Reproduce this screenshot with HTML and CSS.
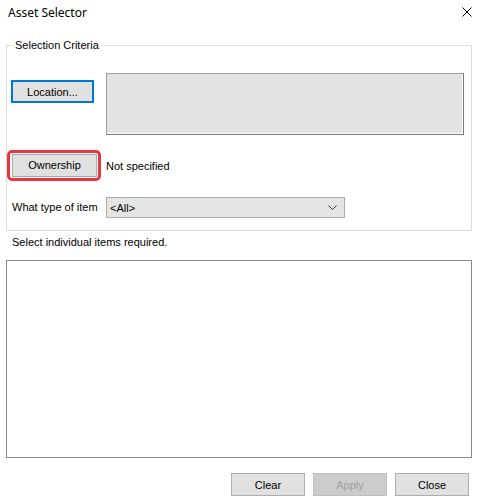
FILE: index.html
```html
<!DOCTYPE html>
<html lang="en">
<head>
    <meta charset="UTF-8">
    <meta name="viewport" content="width=device-width, initial-scale=1.0">
    <title>Asset Selector</title>
    <link rel="stylesheet" href="styles.css">
</head>
<body>
    <div class="dialog">
        <div class="titlebar">
            <span class="title">Asset Selector</span>
            <button class="close-x" type="button" aria-label="Close">
                <svg width="10" height="10" viewBox="0 0 10 10">
                    <path d="M0.5 0.5 L9.5 9.5 M9.5 0.5 L0.5 9.5" stroke="#000" stroke-width="1" fill="none"/>
                </svg>
            </button>
        </div>

        <fieldset class="criteria">
            <legend>Selection Criteria</legend>
            <div class="criteria-grid">
                <div class="location-cell">
                    <button type="button" class="btn btn-focus">Location...</button>
                </div>
                <div class="location-box"></div>

                <div>
                    <span class="highlight">
                        <button type="button" class="btn">Ownership</button>
                    </span>
                </div>
                <div class="value">Not specified</div>

                <label class="type-label" for="item_type">What type of item</label>
                <div class="select-wrap">
                    <select id="item_type" name="item_type">
                        <option>&lt;All&gt;</option>
                    </select>
                    <svg class="chevron" width="9" height="5" viewBox="0 0 9 5">
                        <path d="M0.5 0.5 L4.5 4.5 L8.5 0.5" stroke="#333" stroke-width="1" fill="none"/>
                    </svg>
                </div>
            </div>
        </fieldset>

        <p class="hint">Select individual items required.</p>

        <div class="item-list"></div>

        <div class="actions">
            <button type="button" class="btn">Clear</button>
            <button type="button" class="btn" disabled>Apply</button>
            <button type="button" class="btn">Close</button>
        </div>
    </div>
</body>
</html>
```

FILE: styles.css
```css
body {
    margin: 0;
    background: #fff;
    font-family: "Liberation Sans", Arial, sans-serif;
    font-size: 11px;
    color: #000;
}
.dialog {
    width: 478px;
    height: 499px;
    padding: 0 6px;
    box-sizing: border-box;
}
.titlebar {
    height: 24px;
    display: flex;
    justify-content: space-between;
    align-items: center;
    padding-left: 2px;
}
.title {
    font-family: "Noto Sans", "Liberation Sans", sans-serif;
    font-size: 12px;
}
.close-x {
    border: none;
    background: none;
    padding: 0;
    width: 10px;
    height: 10px;
    display: block;
}
.close-x svg {
    display: block;
}

/* group box */
.criteria {
    margin: 14px 0 0 0;
    padding: 0 7px 12px 0;
    border: 1px solid #dcdcdc;
    min-width: 0;
}
.criteria legend {
    margin-left: 6px;
    padding: 0 2px;
    line-height: 14px;
}
.criteria-grid {
    display: grid;
    grid-template-columns: 99px 1fr;
    grid-template-rows: 62px 32px 23px;
    row-gap: 14px;
    margin-top: 21px;
    align-items: center;
}
.location-cell {
    align-self: start;
    padding-top: 7px;
    padding-left: 4px;
}
.location-box {
    height: 62px;
    box-sizing: border-box;
    border: 1px solid #7a7a7a;
    border-top-color: #a0a0a0;
    border-left-color: #a0a0a0;
    background: #e3e3e3;
    box-shadow: inset -1px -1px 0 #fff;
}
.value {
    padding-top: 1px;
}

/* buttons */
.btn {
    width: 74px;
    height: 23px;
    padding: 0;
    font-family: inherit;
    font-size: 11px;
    color: #000;
    background: #e1e1e1;
    border: 1px solid #adadad;
    box-sizing: border-box;
}
.btn-focus {
    width: 83px;
    border: 2px solid #0078d7;
}
.btn:disabled {
    background: #cccccc;
    border-color: #bfbfbf;
    color: #a0a0a0;
}
.highlight {
    display: inline-block;
    border: 3px solid #e8363c;
    border-radius: 5px;
    padding: 1px 1px 1px 2px;
}
.highlight .btn {
    width: 85px;
    display: block;
}

/* type dropdown */
.type-label {
    align-self: end;
    line-height: 21px;
    padding-left: 5px;
    white-space: nowrap;
}
.select-wrap {
    align-self: end;
    position: relative;
    width: 239px;
    height: 21px;
}
.select-wrap select {
    width: 100%;
    height: 21px;
    appearance: none;
    border: 1px solid #acacac;
    background: #e5e5e5;
    font-family: inherit;
    font-size: 11px;
    color: #000;
    padding: 0 3px;
    border-radius: 0;
}
.chevron {
    position: absolute;
    right: 8px;
    top: 8px;
    pointer-events: none;
}

.hint {
    margin: 0;
    padding: 5px 0 0 6px;
    line-height: 13px;
}

.item-list {
    margin-top: 11px;
    height: 198px;
    border: 1px solid #828790;
    box-sizing: border-box;
    background: #fff;
}

.actions {
    display: flex;
    justify-content: flex-end;
    gap: 8px;
    margin-top: 15px;
    padding-right: 3px;
}
```
